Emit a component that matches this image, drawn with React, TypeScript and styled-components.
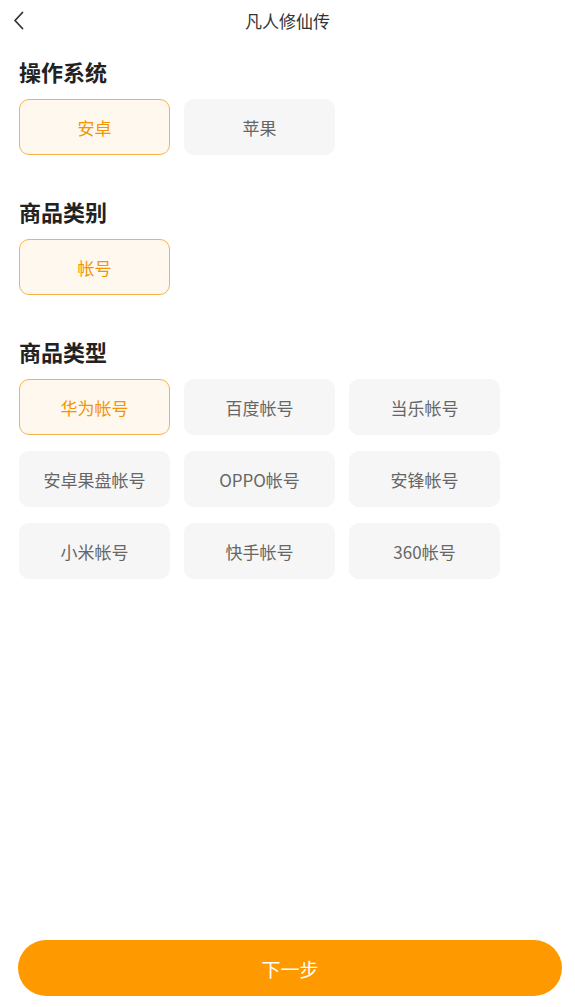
import styled, { createGlobalStyle } from "styled-components";

const GlobalStyle = createGlobalStyle`
  html, body {
    margin: 0;
    padding: 0;
    background: #fff;
  }
  body {
    font-family: "Noto Sans CJK SC", "Noto Sans", sans-serif;
  }
`;

const Page = styled.div`
  width: 575px;
  height: 1007px;
  display: flex;
  flex-direction: column;
  box-sizing: border-box;
`;

const Header = styled.div`
  height: 40px;
  display: grid;
  grid-template-columns: 40px 1fr 40px;
  align-items: center;
`;

const BackButton = styled.div`
  display: flex;
  align-items: center;
  padding-left: 13px;
  color: #333;
`;

const Title = styled.div`
  text-align: center;
  font-size: 17px;
  color: #333;
`;

const Content = styled.div`
  flex: 1;
  padding: 0 19px;
`;

const Section = styled.section`
  margin-top: 12px;
  & + & {
    margin-top: 37px;
  }
`;

const SectionTitle = styled.h2`
  margin: 0 0 9px;
  height: 38px;
  line-height: 38px;
  font-size: 22px;
  font-weight: 700;
  color: #222;
`;

const Options = styled.div`
  display: grid;
  grid-template-columns: repeat(3, 151px);
  column-gap: 14px;
  row-gap: 16px;
`;

const Option = styled.div<{ $active?: boolean }>`
  height: 56px;
  box-sizing: border-box;
  border-radius: 10px;
  display: flex;
  align-items: center;
  justify-content: center;
  font-size: 17px;
  color: ${(p) => (p.$active ? "#f39400" : "#666")};
  background: ${(p) => (p.$active ? "#fff8ef" : "#f6f6f6")};
  border: 1px solid ${(p) => (p.$active ? "#f8b24a" : "#f6f6f6")};
`;

const Footer = styled.div`
  padding: 0 13px 11px 18px;
`;

const NextButton = styled.button`
  width: 100%;
  height: 56px;
  border: none;
  border-radius: 28px;
  background: #ff9900;
  color: #fff;
  font-size: 19px;
  font-family: "Noto Sans CJK SC", "Noto Sans", sans-serif;
`;

const sections = [
  { title: "操作系统", items: ["安卓", "苹果"] },
  { title: "商品类别", items: ["帐号"] },
  {
    title: "商品类型",
    items: [
      "华为帐号",
      "百度帐号",
      "当乐帐号",
      "安卓果盘帐号",
      "OPPO帐号",
      "安锋帐号",
      "小米帐号",
      "快手帐号",
      "360帐号",
    ],
  },
];

export default function App() {
  return (
    <Page>
      <GlobalStyle />
      <Header>
        <BackButton>
          <svg width="11" height="19" viewBox="0 0 11 19" fill="none">
            <path d="M9.5 1.5 L2 9.5 L9.5 17.5" stroke="#333" strokeWidth="1.8" strokeLinecap="round" strokeLinejoin="round" />
          </svg>
        </BackButton>
        <Title>凡人修仙传</Title>
        <div />
      </Header>
      <Content>
        {sections.map((s) => (
          <Section key={s.title}>
            <SectionTitle>{s.title}</SectionTitle>
            <Options>
              {s.items.map((it, i) => (
                <Option key={it} $active={i === 0}>
                  {it}
                </Option>
              ))}
            </Options>
          </Section>
        ))}
      </Content>
      <Footer>
        <NextButton>下一步</NextButton>
      </Footer>
    </Page>
  );
}
